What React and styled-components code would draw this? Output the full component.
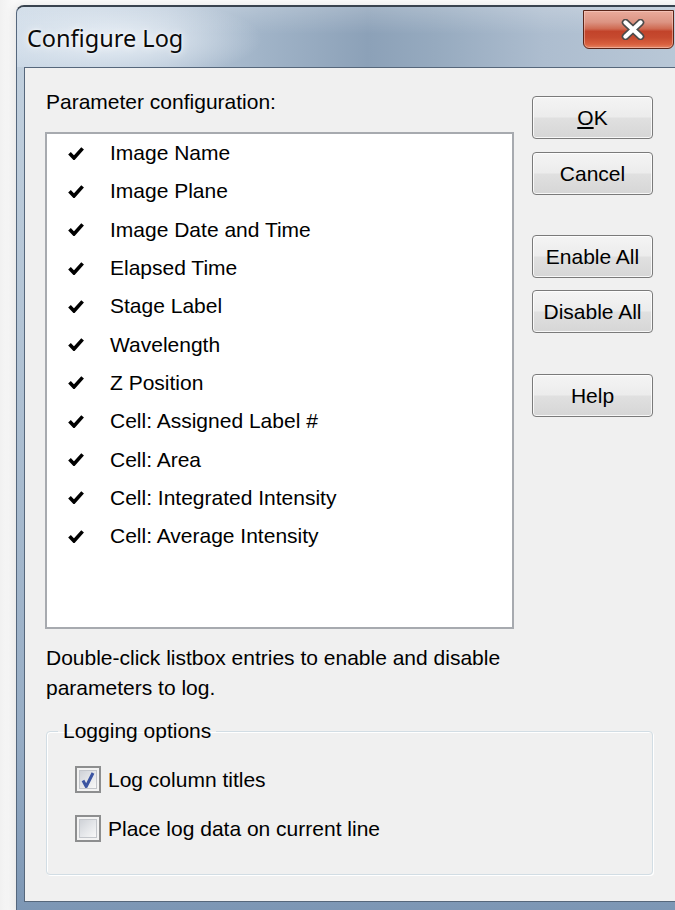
import React from "react";
import styled, { createGlobalStyle } from "styled-components";

const GlobalStyle = createGlobalStyle`
  html, body {
    margin: 0;
    padding: 0;
    height: 910px;
    overflow: hidden;
    background: #f8f8f8;
  }
  * { box-sizing: border-box; }
`;

const UI_FONT = `"Liberation Sans", Arial, sans-serif`;

const Page = styled.div`
  width: 675px;
  height: 910px;
  overflow: hidden;
  padding: 5px 0 0 16px;
  background: linear-gradient(90deg, #f1f1f1 0px, #fafafa 14px);
`;

const Window = styled.div`
  width: 676px;
  border-top: 2px solid #39434f;
  border-left: 1px solid #55677d;
  border-radius: 8px 0 0 0;
  background: linear-gradient(180deg, #c4d2df 0%, #b3c4d5 35%, #97adc5 80%, #7c96b4 100%);
  box-shadow: -3px 0 8px rgba(0, 0, 0, 0.08);
`;

const TitleBar = styled.div`
  height: 60px;
  display: flex;
  align-items: flex-start;
  padding: 0 18px 0 10px;
  border-radius: 7px 0 0 0;
  background:
    linear-gradient(180deg, rgba(255, 255, 255, 0.2) 0%, rgba(255, 255, 255, 0) 45%),
    radial-gradient(ellipse 150px 42px at 95px 32px, rgba(236, 242, 248, 0.95), rgba(236, 242, 248, 0) 100%),
    linear-gradient(90deg, #c8d6e4 0%, #b7c7d8 22%, #a1b4c8 36%, #8ca1b8 52%, #96aabf 62%, #adbdcf 78%, #bac9d8 100%);
`;

const Title = styled.span`
  margin-top: 16px;
  font-family: "Noto Sans", "Open Sans", sans-serif;
  font-size: 23.5px;
  line-height: 30px;
  color: #0a0a0a;
  text-shadow: 0 0 8px rgba(255, 255, 255, 0.95), 0 0 3px rgba(255, 255, 255, 0.9);
`;

const CloseButton = styled.div`
  margin-left: auto;
  margin-top: 3px;
  width: 91px;
  height: 39px;
  display: flex;
  align-items: center;
  justify-content: center;
  padding-left: 9px;
  border: 1px solid #5a2519;
  border-radius: 0 0 6px 6px;
  background: linear-gradient(180deg, #e9ab9c 0%, #dc9483 30%, #cf6a52 48%, #c2432a 55%, #c64a2f 72%, #d9613f 90%, #e48565 100%);
  box-shadow: inset 0 0 0 1px rgba(255, 220, 210, 0.45);
`;

const Frame = styled.div`
  padding: 0 0 12px 7px;
`;

const Client = styled.div`
  width: 660px;
  border: 1px solid #56677b;
  background: #f0f0f0;
  padding: 21px 30px 26px 20px;
  font-family: ${UI_FONT};
  font-size: 21px;
  color: #000;
`;

const TopRow = styled.div`
  display: flex;
  gap: 18px;
  align-items: flex-start;
`;

const LeftCol = styled.div`
  width: 469px;
  display: flex;
  flex-direction: column;
`;

const Label = styled.div`
  margin-left: 1px;
  line-height: 26px;
  height: 26px;
`;

const ListBox = styled.div`
  margin-top: 17px;
  height: 497px;
  border: 2px solid #a7aaaf;
  background: #fff;
`;

const ListRow = styled.div`
  display: flex;
  align-items: center;
  height: 38.3px;
  padding-left: 21px;
  white-space: nowrap;
`;

const ItemText = styled.span`
  margin-left: 26px;
`;

const ButtonCol = styled.div`
  width: 121px;
  display: flex;
  flex-direction: column;
`;

const Button = styled.button`
  margin-top: ${(p) => p.$space}px;
  width: 121px;
  height: 43px;
  padding: 0;
  border: 1px solid #7a7a7a;
  border-radius: 4px;
  background: linear-gradient(180deg, #f4f4f4 0%, #ececec 48%, #e0e0e0 52%, #d6d6d6 100%);
  box-shadow: inset 0 0 0 1px rgba(255, 255, 255, 0.8);
  font-family: ${UI_FONT};
  font-size: 21px;
  color: #000;
  u { text-decoration-thickness: 2px; text-underline-offset: 2px; }
`;

const Hint = styled.p`
  margin: 14px 0 0 1px;
  width: 470px;
  line-height: 30px;
`;

const Group = styled.fieldset`
  margin: 16px 0 0 1px;
  width: 607px;
  padding: 23px 0 32px 0;
  border: 1px solid #d2dde4;
  border-radius: 4px;
  box-shadow: inset 1px 1px 0 #ffffff, 1px 1px 0 #ffffff;
`;

const Legend = styled.legend`
  margin-left: 11px;
  padding: 0 5px;
  line-height: 24px;
`;

const CheckRow = styled.label`
  display: flex;
  align-items: center;
  gap: 7px;
  height: 27px;
  margin: ${(p) => p.$space}px 0 0 28px;
`;

const CheckBox = styled.span`
  width: 26px;
  height: 27px;
  border: 2px solid #8d8e8f;
  background: #f3f3f3;
  padding: 2px;
  display: flex;
`;

const CheckFace = styled.span`
  flex: 1;
  display: flex;
  align-items: center;
  justify-content: center;
  border: 1px solid #c3c6cb;
  background: linear-gradient(135deg, #cfd2d7 0%, #e4e6e9 50%, #f8f8f8 100%);
`;

const Tick = () => (
  <svg width="16" height="13" viewBox="0 0 16 13">
    <path d="M1.5 6.2 L6 11 L14.6 1.4" fill="none" stroke="#000" strokeWidth="3.6" />
  </svg>
);

const BlueTick = () => (
  <svg width="14" height="18" viewBox="0 0 14 18">
    <path d="M2 9.5 L5.2 15.5 L12 2" fill="none" stroke="#3c55a2" strokeWidth="3" strokeLinejoin="round" />
  </svg>
);

const CloseGlyph = () => (
  <svg width="24" height="21" viewBox="0 0 24 21">
    <path d="M4.5 3.5 L19.5 17.5 M19.5 3.5 L4.5 17.5" stroke="#4b4b4b" strokeWidth="7.5" strokeLinecap="round" />
    <path d="M4.5 3.5 L19.5 17.5 M19.5 3.5 L4.5 17.5" stroke="#ffffff" strokeWidth="4.4" strokeLinecap="round" />
  </svg>
);

const parameters = [
  "Image Name",
  "Image Plane",
  "Image Date and Time",
  "Elapsed Time",
  "Stage Label",
  "Wavelength",
  "Z Position",
  "Cell: Assigned Label #",
  "Cell: Area",
  "Cell: Integrated Intensity",
  "Cell: Average Intensity",
];

export default function App() {
  return (
    <>
      <GlobalStyle />
      <Page>
        <Window>
          <TitleBar>
            <Title>Configure Log</Title>
            <CloseButton>
              <CloseGlyph />
            </CloseButton>
          </TitleBar>
          <Frame>
            <Client>
              <TopRow>
                <LeftCol>
                  <Label>Parameter configuration:</Label>
                  <ListBox>
                    {parameters.map((name) => (
                      <ListRow key={name}>
                        <Tick />
                        <ItemText>{name}</ItemText>
                      </ListRow>
                    ))}
                  </ListBox>
                </LeftCol>
                <ButtonCol>
                  <Button $space={7}>
                    <u>O</u>K
                  </Button>
                  <Button $space={13}>Cancel</Button>
                  <Button $space={40}>Enable All</Button>
                  <Button $space={12}>Disable All</Button>
                  <Button $space={41}>Help</Button>
                </ButtonCol>
              </TopRow>
              <Hint>Double-click listbox entries to enable and disable parameters to log.</Hint>
              <Group>
                <Legend>Logging options</Legend>
                <CheckRow $space={0}>
                  <CheckBox>
                    <CheckFace>
                      <BlueTick />
                    </CheckFace>
                  </CheckBox>
                  Log column titles
                </CheckRow>
                <CheckRow $space={22}>
                  <CheckBox>
                    <CheckFace />
                  </CheckBox>
                  Place log data on current line
                </CheckRow>
              </Group>
            </Client>
          </Frame>
        </Window>
      </Page>
    </>
  );
}
